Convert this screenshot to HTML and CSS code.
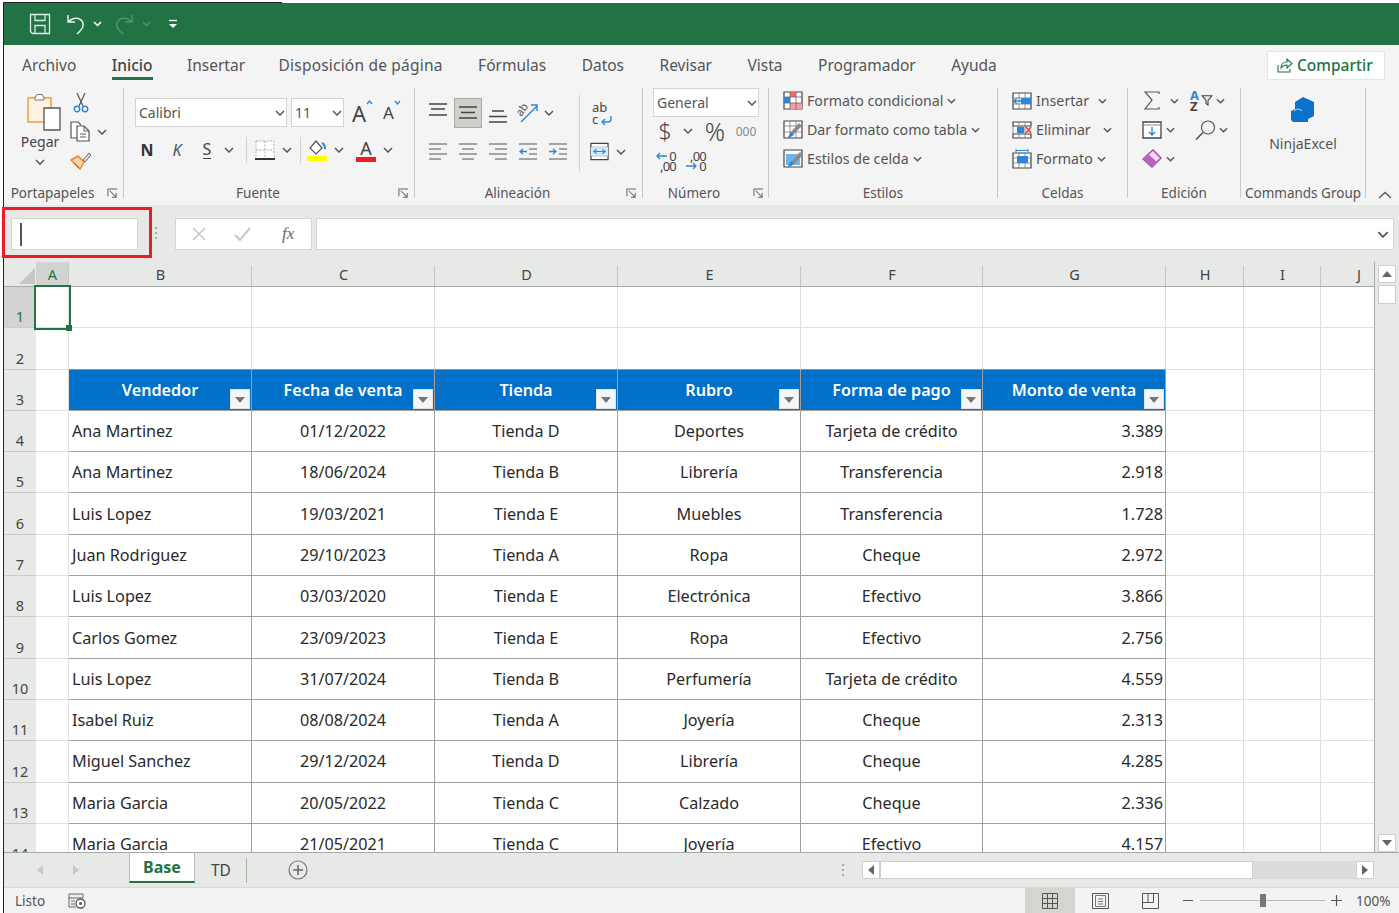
FILE: index.html
```html
<!DOCTYPE html>
<html lang="es">
<head>
<meta charset="utf-8">
<title>Excel</title>
<link rel="stylesheet" href="styles.css">
</head>
<body>
<svg class="defs" width="0" height="0">
  <symbol id="chev" viewBox="0 0 10 6"><path d="M1 1l4 4 4-4" fill="none" stroke="#555" stroke-width="1.5"/></symbol>
  <symbol id="launch" viewBox="0 0 12 12"><path d="M1 9V1h10M3 3l7 7M5.500 10H10V5.500" fill="none" stroke="#666" stroke-width="1.100"/></symbol>
</svg>
<div class="edge"></div>
<div class="app">
  <header class="qat">
    <svg class="q-save" width="22" height="22" viewBox="0 0 22 22"><path d="M1.500 1.500h19v19h-17l-2-2zM6 1.500v6h10v-6M6 20.500v-8h10v8" fill="none" stroke="#dfeae3" stroke-width="1.300"/></svg>
    <svg class="q-undo" width="20" height="22" viewBox="0 0 20 22"><path d="M2 2v7h7M2.500 9C6 4.500 13 4 16 8c2.500 3.500 1 8-5 13" fill="none" stroke="#e8f0eb" stroke-width="1.500"/></svg>
    <svg class="q-c" width="9" height="6"><path d="M1 1l3.500 3.500L8 1" fill="none" stroke="#fff" stroke-width="1.500"/></svg>
    <svg class="q-redo" width="20" height="22" viewBox="0 0 20 22"><path d="M18 2v7h-7M17.500 9C14 4.500 7 4 4 8c-2.500 3.500-1 8 5 13" fill="none" stroke="#4c9270" stroke-width="1.500"/></svg>
    <svg class="q-c2" width="9" height="6"><path d="M1 1l3.500 3.500L8 1" fill="none" stroke="#4c9270" stroke-width="1.500"/></svg>
    <svg class="q-more" width="10" height="10" viewBox="0 0 10 10"><path d="M1 1.500h8" stroke="#fff" stroke-width="1.300"/><path d="M1 5h8L5 9z" fill="#fff"/></svg>
  </header>

  <nav class="tabs">
    <span class="tab">Archivo</span>
    <span class="tab active">Inicio</span>
    <span class="tab t-ins">Insertar</span>
    <span class="tab t-disp">Disposición de página</span>
    <span class="tab">Fórmulas</span>
    <span class="tab">Datos</span>
    <span class="tab">Revisar</span>
    <span class="tab">Vista</span>
    <span class="tab">Programador</span>
    <span class="tab">Ayuda</span>
    <span class="share">
      <svg width="16" height="15" viewBox="0 0 16 15"><path d="M1 7v7h12v-3M4 10c0-4 3-6 6-6V1l5 4.500L10 10V7C7.500 7 5.500 8 4 10z" fill="none" stroke="#217346" stroke-width="1.100"/></svg>
      Compartir
    </span>
  </nav>

  <section class="ribbon">
    <div class="group g-clip">
      <div class="body clip">
        <div class="paste">
          <svg width="34" height="38" viewBox="0 0 34 38"><path d="M1 5h7l2-3h5l2 3h7v24H1z" fill="#fdf3e0" stroke="#e8a33d" stroke-width="1.500"/><path d="M8 5l2-3.500h5l2 3.500v2H8z" fill="#fff" stroke="#777"/><path d="M17 15h16v22H17z" fill="#fff" stroke="#555" stroke-width="1.300"/></svg>
          <span class="paste-l">Pegar</span>
          <svg class="chev" width="10" height="6"><use href="#chev"/></svg>
        </div>
        <div class="clip-tools">
          <svg class="scis" width="16" height="21" viewBox="0 0 16 21"><path d="M4 1l6 13M12 1L6 14" stroke="#555" stroke-width="1.200" fill="none"/><circle cx="4" cy="17" r="2.700" fill="none" stroke="#2b88d8" stroke-width="1.400"/><circle cx="12" cy="17" r="2.700" fill="none" stroke="#2b88d8" stroke-width="1.400"/></svg>
          <span class="copy-row">
            <svg width="21" height="21" viewBox="0 0 21 21"><path d="M7 17H1V1h7l3 3" fill="#fff" stroke="#555" stroke-width="1.200"/><path d="M7 5h7l5 5v10H7z" fill="#fff" stroke="#555" stroke-width="1.200"/><path d="M14 5v5h5M10 13h6M10 16h6" fill="none" stroke="#555"/></svg>
            <svg class="chev" width="10" height="6"><use href="#chev"/></svg>
          </span>
          <svg class="brush" width="22" height="20" viewBox="0 0 22 20"><path d="M1 9l9 9 4-7-6-6z" fill="#fbd9a5" stroke="#e8872d" stroke-width="1.500"/><path d="M13 9l6-7 2 2-6 7zM4 12l5 5" fill="#ddd" stroke="#666"/></svg>
        </div>
      </div>
      <div class="label"><span>Portapapeles</span><svg class="launch" width="11" height="11"><use href="#launch"/></svg></div>
    </div>

    <div class="group g-font">
      <div class="body font">
        <div class="font-r1">
          <span class="select sel-font">Calibri<svg width="10" height="6"><use href="#chev"/></svg></span>
          <span class="select sel-size">11<svg width="10" height="6"><use href="#chev"/></svg></span>
          <span class="grow"><b>A</b><svg width="7" height="5"><path d="M1 4l2.500-3L6 4" fill="none" stroke="#2b88d8" stroke-width="1.300"/></svg></span>
          <span class="shrink"><b>A</b><svg width="7" height="5"><path d="M1 1l2.500 3L6 1" fill="none" stroke="#2b88d8" stroke-width="1.300"/></svg></span>
        </div>
        <div class="font-r2">
          <b class="fb">N</b>
          <i class="fi">K</i>
          <span class="fu">S</span>
          <svg width="10" height="6"><use href="#chev"/></svg>
          <span class="vsep"></span>
          <svg width="20" height="20" viewBox="0 0 20 20"><path d="M1 1h18v18H1z" fill="#fff" stroke="#aaa" stroke-dasharray="2 1.500"/><path d="M1 10h18M10 1v18" stroke="#aaa" stroke-dasharray="2 1.500"/><path d="M0 19h20" stroke="#333" stroke-width="2"/></svg>
          <svg width="10" height="6"><use href="#chev"/></svg>
          <span class="vsep"></span>
          <svg width="20" height="21" viewBox="0 0 20 21"><path d="M9 1l6 7-6 6-6-6z" fill="#fff" stroke="#555" stroke-width="1.200"/><path d="M15 3c2 1 3 3 3 6" fill="none" stroke="#2b88d8" stroke-width="2"/><rect y="16" width="20" height="5" fill="#ffff00"/></svg>
          <svg width="10" height="6"><use href="#chev"/></svg>
          <span class="colorA">A</span>
          <svg width="10" height="6"><use href="#chev"/></svg>
        </div>
      </div>
      <div class="label"><span>Fuente</span><svg class="launch" width="11" height="11"><use href="#launch"/></svg></div>
    </div>

    <div class="group g-align">
      <div class="body align">
        <div class="align-grid">
          <svg class="al-t" width="18" height="13" viewBox="0 0 18 13"><path d="M0 1h18M2 6h14M0 12h18" stroke="#444" stroke-width="1.300"/></svg>
          <span class="al-on"><svg width="18" height="13" viewBox="0 0 18 13"><path d="M0 1h18M2 6.500h14M0 12h18" stroke="#444" stroke-width="1.300"/></svg></span>
          <svg class="al-b" width="18" height="13" viewBox="0 0 18 13"><path d="M3 1h12M0 6.500h18M0 12h18" stroke="#444" stroke-width="1.300"/></svg>
          <svg class="orient" width="22" height="21" viewBox="0 0 22 21"><path d="M4 20L20 4M14 3h6v6" fill="none" stroke="#2b88d8" stroke-width="1.400"/><text x="0" y="11" class="svgtxt" transform="rotate(-55 6 9)">ab</text></svg>
          <svg class="ch-or" width="10" height="6"><use href="#chev"/></svg>
          <svg width="18" height="17" viewBox="0 0 18 17"><path d="M0 1h18M0 6h12M0 11h18M0 16h12" stroke="#555" stroke-width="1.200"/></svg>
          <svg width="18" height="17" viewBox="0 0 18 17"><path d="M0 1h18M3 6h12M0 11h18M3 16h12" stroke="#555" stroke-width="1.200"/></svg>
          <svg width="18" height="17" viewBox="0 0 18 17"><path d="M0 1h18M6 6h12M0 11h18M6 16h12" stroke="#555" stroke-width="1.200"/></svg>
          <svg width="18" height="17" viewBox="0 0 18 17"><path d="M0 1h18M10 6h8M10 11h8M0 16h18" stroke="#555" stroke-width="1.200"/><path d="M8 8.500H1M4 6L1 8.500 4 11" fill="none" stroke="#2b88d8" stroke-width="1.300"/></svg>
          <svg width="18" height="17" viewBox="0 0 18 17"><path d="M0 1h18M10 6h8M10 11h8M0 16h18" stroke="#555" stroke-width="1.200"/><path d="M0 8.500h7M4 6l3 2.500L4 11" fill="none" stroke="#2b88d8" stroke-width="1.300"/></svg>
        </div>
        <span class="vsep tall"></span>
        <div class="align-right">
          <span class="wrap"><span class="wrap-t">ab<br>c</span><svg width="12" height="10" viewBox="0 0 12 10"><path d="M10 1v3c0 2-1 3-3 3H1M4 4L1 7l3 3" fill="none" stroke="#2b88d8" stroke-width="1.400"/></svg></span>
          <span class="merge-row">
            <svg width="19" height="19" viewBox="0 0 20 19"><path d="M1 1h18v17H1z" fill="#fff" stroke="#444" stroke-width="1.300"/><path d="M1 5h18M1 14h18" stroke="#888"/><path d="M1 5h18v9H1z" fill="#d6ebfa"/><path d="M4 9.500h12M7 7L4 9.500 7 12M13 7l3 2.500L13 12" fill="none" stroke="#2b88d8" stroke-width="1.200"/></svg>
            <svg width="10" height="6"><use href="#chev"/></svg>
          </span>
        </div>
      </div>
      <div class="label"><span>Alineación</span><svg class="launch" width="11" height="11"><use href="#launch"/></svg></div>
    </div>

    <div class="group g-num">
      <div class="body num">
        <span class="select sel-num">General<svg width="10" height="6"><use href="#chev"/></svg></span>
        <div class="num-r2">
          <span class="dollar">$</span>
          <svg width="10" height="6"><use href="#chev"/></svg>
          <span class="pct">%</span>
          <span class="mil">000</span>
        </div>
        <div class="num-r3">
          <span class="dec"><span class="d0"><svg width="11" height="8" viewBox="0 0 11 8"><path d="M11 4H1M4 1L1 4l3 3" fill="none" stroke="#2b88d8" stroke-width="1.300"/></svg><span>0</span></span><span class="d2">,00</span></span>
          <span class="dec"><span class="d2">,00</span><span class="d0"><svg width="11" height="8" viewBox="0 0 11 8"><path d="M0 4h10M7 1l3 3-3 3" fill="none" stroke="#2b88d8" stroke-width="1.300"/></svg><span>0</span></span></span>
        </div>
      </div>
      <div class="label"><span>Número</span><svg class="launch" width="11" height="11"><use href="#launch"/></svg></div>
    </div>

    <div class="group g-sty">
      <div class="body list">
        <div class="li">
          <svg width="20" height="19" viewBox="0 0 20 19"><path d="M1 1h18v17H1z" fill="#fff" stroke="#444" stroke-width="1.200"/><path d="M7 1h6v5H7z" fill="#f16b6b"/><path d="M1 6h6v6H1z" fill="#2b88d8"/><path d="M7 12h12v6H7z" fill="#f4a0a0"/><path d="M1 6h18M1 12h18M7 1v17M13 1v17" stroke="#666" stroke-width=".8"/></svg>
          <span>Formato condicional</span><svg class="c" width="9" height="6"><use href="#chev"/></svg>
        </div>
        <div class="li">
          <svg width="20" height="19" viewBox="0 0 20 19"><path d="M1 1h18v17H1z" fill="#fff" stroke="#444" stroke-width="1.200"/><path d="M1 6h18M1 12h18M7 1v17M13 1v17" stroke="#777" stroke-width=".8"/><path d="M6 18l2-6 8-9 3 3-8 8z" fill="#8a8a8a"/><path d="M4 19l4-7 3 3z" fill="#2b88d8"/></svg>
          <span>Dar formato como tabla</span><svg class="c" width="9" height="6"><use href="#chev"/></svg>
        </div>
        <div class="li">
          <svg width="20" height="19" viewBox="0 0 20 19"><path d="M1 1h18v17H1z" fill="#fff" stroke="#444" stroke-width="1.200"/><path d="M3 5h14v11H3z" fill="#6fb3e8"/><path d="M7 18l2-6 8-9 3 3-8 8z" fill="#8a8a8a"/><path d="M4 19l4-7 3 3z" fill="#2b88d8"/></svg>
          <span>Estilos de celda</span><svg class="c" width="9" height="6"><use href="#chev"/></svg>
        </div>
      </div>
      <div class="label"><span>Estilos</span></div>
    </div>

    <div class="group g-cel">
      <div class="body list">
        <div class="li">
          <svg width="20" height="18" viewBox="0 0 20 18"><path d="M1 1h18v16H1z" fill="#fff" stroke="#444" stroke-width="1.200"/><path d="M1 6h18M1 12h18M7 1v16M13 1v16" stroke="#777" stroke-width=".8"/><path d="M9 6h10v6H9z" fill="#2b88d8"/><path d="M11 9H2M5 6L2 9l3 3" fill="none" stroke="#2b88d8" stroke-width="1.400"/></svg>
          <span>Insertar</span><svg class="c c-ins" width="9" height="6"><use href="#chev"/></svg>
        </div>
        <div class="li">
          <svg width="20" height="18" viewBox="0 0 20 18"><path d="M1 1h18v4H1zM1 13h18v4H1z" fill="#fff" stroke="#444" stroke-width="1.200"/><path d="M1 5v8M7 1v16M13 1v16" stroke="#777" stroke-width=".8"/><path d="M5 6h7v6H5z" fill="#2b88d8"/><path d="M14 6l5 6M19 6l-5 6" stroke="#e8393b" stroke-width="1.400"/></svg>
          <span>Eliminar</span><svg class="c c-eli" width="9" height="6"><use href="#chev"/></svg>
        </div>
        <div class="li">
          <svg width="20" height="20" viewBox="0 0 20 20"><path d="M1 4h18v15H1z" fill="#fff" stroke="#444" stroke-width="1.200"/><path d="M1 9h18M1 14h18M7 4v15M13 4v15" stroke="#777" stroke-width=".8"/><path d="M5 7h11v7H5z" fill="#2b88d8"/><path d="M4 1.500h12M4 0v3M16 0v3" stroke="#2b88d8"/></svg>
          <span>Formato</span><svg class="c" width="9" height="6"><use href="#chev"/></svg>
        </div>
      </div>
      <div class="label"><span>Celdas</span></div>
    </div>

    <div class="group g-edit">
      <div class="body edit">
        <div class="ed-row">
          <svg class="ed-a" width="16" height="19" viewBox="0 0 16 19"><path d="M15 3V1H1l7 8-7 9h14v-2" fill="none" stroke="#555" stroke-width="1.200"/></svg>
          <svg class="ed-c" width="9" height="6"><use href="#chev"/></svg>
          <span class="sort"><span class="az"><span class="az-a">A</span><span class="az-z">Z</span></span><svg width="12" height="11" viewBox="0 0 11 11"><path d="M.700.700h9.600L6.500 5.500V10L4.500 8.500v-3z" fill="none" stroke="#444" stroke-width="1.100"/></svg></span>
          <svg class="ed-d" width="9" height="6"><use href="#chev"/></svg>
        </div>
        <div class="ed-row">
          <svg class="ed-a" width="20" height="18" viewBox="0 0 20 18"><path d="M1 1h18v16H1z" fill="#fff" stroke="#444" stroke-width="1.300"/><path d="M1 4h18" stroke="#888"/><path d="M10 6v8M7 11l3 3 3-3" fill="none" stroke="#2b88d8" stroke-width="1.400"/></svg>
          <svg class="ed-c2" width="9" height="6"><use href="#chev"/></svg>
          <svg class="ed-find" width="21" height="20" viewBox="0 0 21 20"><circle cx="13" cy="7.500" r="6.500" fill="none" stroke="#555" stroke-width="1.200"/><path d="M8 12.500L1 19.500" stroke="#555" stroke-width="1.600"/></svg>
          <svg class="ed-d2" width="9" height="6"><use href="#chev"/></svg>
        </div>
        <div class="ed-row">
          <svg class="ed-a" width="20" height="19" viewBox="0 0 20 19"><path d="M1 10L11 1l8 8-9 9z" fill="#f3d9f3" stroke="#a64ca6" stroke-width="1.500"/><path d="M1 10l5-5 9 8-5 5z" fill="#b565b5"/></svg>
          <svg class="ed-c2" width="9" height="6"><use href="#chev"/></svg>
        </div>
      </div>
      <div class="label"><span>Edición</span></div>
    </div>

    <div class="group g-cmd">
      <div class="body cmd">
        <svg width="24" height="26" viewBox="0 0 24 26"><path d="M12 0l11 5v14l-6 3v3H2l-2-2v-9l4-2V5z" fill="#0b72c9"/><path d="M3 14c3-3 6-2 8 0" fill="none" stroke="#dbe9f5" stroke-width="1"/></svg>
        <span>NinjaExcel</span>
      </div>
      <div class="label"><span>Commands Group</span></div>
    </div>

    <svg class="collapse" width="14" height="8" viewBox="0 0 14 8"><path d="M1 7l6-5.500L13 7" fill="none" stroke="#555" stroke-width="1.300"/></svg>
  </section>

  <section class="fbar">
    <div class="namebox"><span class="caret"></span></div>
    <span class="grip"></span>
    <div class="fbtns">
      <svg width="14" height="14" viewBox="0 0 14 14"><path d="M1 1l12 12M13 1L1 13" stroke="#c8c8c8" stroke-width="1.600"/></svg>
      <svg width="17" height="14" viewBox="0 0 17 14"><path d="M1 8l5 5L16 1" fill="none" stroke="#c8c8c8" stroke-width="2"/></svg>
      <span class="fx">fx</span>
    </div>
    <div class="finput"><svg width="12" height="7"><use href="#chev"/></svg></div>
    <div class="redbox"></div>
  </section>

  <section class="main">
    <div class="sheet">
      <div class="row colhead">
        <span class="corner"><svg width="16" height="16" viewBox="0 0 16 16"><path d="M16 0v16H0z" fill="#c4c8c4"/></svg></span>
        <span class="sel">A</span><span>B</span><span>C</span><span>D</span><span>E</span><span>F</span><span>G</span><span>H</span><span>I</span><span class="col-j">J</span>
      </div>
      <div class="row"><b class="rh rh-sel">1</b><u class="cursor"><em class="handle"></em></u><u></u><u></u><u></u><u></u><u></u><u></u><u></u><u></u><u></u></div>
      <div class="row"><b class="rh">2</b><u></u><u class="nb"></u><u class="nb"></u><u class="nb"></u><u class="nb"></u><u class="nb"></u><u class="nb"></u><u></u><u></u><u></u></div>
      <div class="row"><b class="rh">3</b><u></u><s>Vendedor<i class="fl"></i></s><s>Fecha de venta<i class="fl"></i></s><s>Tienda<i class="fl"></i></s><s>Rubro<i class="fl"></i></s><s>Forma de pago<i class="fl"></i></s><s>Monto de venta<i class="fl"></i></s><u></u><u></u><u></u></div>
      <div class="row"><b class="rh">4</b><u></u><p class="l">Ana Martinez</p><p>01/12/2022</p><p>Tienda D</p><p>Deportes</p><p>Tarjeta de crédito</p><p class="r">3.389</p><u></u><u></u><u></u></div>
      <div class="row"><b class="rh">5</b><u></u><p class="l">Ana Martinez</p><p>18/06/2024</p><p>Tienda B</p><p>Librería</p><p>Transferencia</p><p class="r">2.918</p><u></u><u></u><u></u></div>
      <div class="row"><b class="rh">6</b><u></u><p class="l">Luis Lopez</p><p>19/03/2021</p><p>Tienda E</p><p>Muebles</p><p>Transferencia</p><p class="r">1.728</p><u></u><u></u><u></u></div>
      <div class="row"><b class="rh">7</b><u></u><p class="l">Juan Rodriguez</p><p>29/10/2023</p><p>Tienda A</p><p>Ropa</p><p>Cheque</p><p class="r">2.972</p><u></u><u></u><u></u></div>
      <div class="row"><b class="rh">8</b><u></u><p class="l">Luis Lopez</p><p>03/03/2020</p><p>Tienda E</p><p>Electrónica</p><p>Efectivo</p><p class="r">3.866</p><u></u><u></u><u></u></div>
      <div class="row"><b class="rh">9</b><u></u><p class="l">Carlos Gomez</p><p>23/09/2023</p><p>Tienda E</p><p>Ropa</p><p>Efectivo</p><p class="r">2.756</p><u></u><u></u><u></u></div>
      <div class="row"><b class="rh">10</b><u></u><p class="l">Luis Lopez</p><p>31/07/2024</p><p>Tienda B</p><p>Perfumería</p><p>Tarjeta de crédito</p><p class="r">4.559</p><u></u><u></u><u></u></div>
      <div class="row"><b class="rh">11</b><u></u><p class="l">Isabel Ruiz</p><p>08/08/2024</p><p>Tienda A</p><p>Joyería</p><p>Cheque</p><p class="r">2.313</p><u></u><u></u><u></u></div>
      <div class="row"><b class="rh">12</b><u></u><p class="l">Miguel Sanchez</p><p>29/12/2024</p><p>Tienda D</p><p>Librería</p><p>Cheque</p><p class="r">4.285</p><u></u><u></u><u></u></div>
      <div class="row"><b class="rh">13</b><u></u><p class="l">Maria Garcia</p><p>20/05/2022</p><p>Tienda C</p><p>Calzado</p><p>Cheque</p><p class="r">2.336</p><u></u><u></u><u></u></div>
      <div class="row"><b class="rh">14</b><u></u><p class="l">Maria Garcia</p><p>21/05/2021</p><p>Tienda C</p><p>Joyería</p><p>Efectivo</p><p class="r">4.157</p><u></u><u></u><u></u></div>
    </div>
    <aside class="vscroll">
      <span class="sb-btn"><svg width="10" height="6"><path d="M5 0l5 6H0z" fill="#666"/></svg></span>
      <span class="sb-thumb"></span>
      <span class="sb-fill"></span>
      <span class="sb-btn"><svg width="10" height="6"><path d="M0 0h10L5 6z" fill="#666"/></svg></span>
    </aside>
  </section>

  <section class="tabstrip">
    <svg class="nav-l" width="6" height="10"><path d="M6 0v10L0 5z" fill="#c8c8c8"/></svg>
    <svg class="nav-r" width="6" height="10"><path d="M0 0v10l6-5z" fill="#c8c8c8"/></svg>
    <span class="sheet-tab">Base</span>
    <span class="sheet-td">TD</span>
    <span class="tsep"></span>
    <svg class="plus" width="20" height="20" viewBox="0 0 20 20"><circle cx="10" cy="10" r="9" fill="none" stroke="#777" stroke-width="1.200"/><path d="M10 5v10M5 10h10" stroke="#666" stroke-width="1.500"/></svg>
    <span class="hgrip"></span>
    <div class="hscroll">
      <span class="hb"><svg width="6" height="10"><path d="M6 0v10L0 5z" fill="#666"/></svg></span>
      <span class="hthumb"></span>
      <span class="htrack"></span>
      <span class="hb"><svg width="6" height="10"><path d="M0 0v10l6-5z" fill="#666"/></svg></span>
    </div>
  </section>

  <footer class="status">
    <span class="listo">Listo</span>
    <svg class="macro" width="18" height="16" viewBox="0 0 18 16"><path d="M1 1h14v4H1zM1 5v9h7" fill="#eee" stroke="#666"/><path d="M3 8h4M3 11h4" stroke="#666"/><circle cx="12.500" cy="10.500" r="4.500" fill="#fff" stroke="#555" stroke-width="1.300"/><circle cx="12.500" cy="10.500" r="1.500" fill="#555"/></svg>
    <span class="st-on"><svg width="16" height="16" viewBox="0 0 16 16"><path d="M.5.500h15v15H.500zM.5 5.500h15M.5 10.500h15M5.500.500v15M10.500.500v15" fill="none" stroke="#555"/></svg></span>
    <span class="st-btn"><svg width="17" height="16" viewBox="0 0 17 16"><path d="M.5.500h16v15H.500z" fill="none" stroke="#555"/><path d="M3.500 2.500h10v11h-10zM6 6h5M6 8.500h5M6 11h5" fill="none" stroke="#777"/></svg></span>
    <span class="st-btn"><svg width="17" height="16" viewBox="0 0 17 16"><path d="M.5.500h16v15H.500zM.5 9.500h11V.500M6 .500v9" fill="none" stroke="#555"/></svg></span>
    <span class="zm-minus"></span>
    <span class="slider"><span class="knob"></span></span>
    <svg class="zm-plus" width="11" height="11" viewBox="0 0 11 11"><path d="M5.500 0v11M0 5.500h11" stroke="#555" stroke-width="1.200"/></svg>
    <span class="pctz">100%</span>
  </footer>
</div>
</body>
</html>
```
FILE: styles.css
```css
* { box-sizing: border-box; }
html, body { margin: 0; padding: 0; height: 100%; overflow: hidden; background: #fff; }
body { font-family: "Noto Sans", sans-serif; color: #444; font-size: 15px; }
.defs { position: absolute; }
.edge { height: 1px; width: 279px; margin: 2px 0 0 3px; background: #222; }
.app { margin-left: 3px; border-left: 1px solid #222; height: 910px; display: flex; flex-direction: column; width: 1396px; }

.qat { height: 42px; background: #217346; display: flex; align-items: center; padding-left: 25px; flex: none; }
.q-undo { margin-left: 15px; }
.q-c { margin-left: 7px; }
.q-redo { margin-left: 12px; }
.q-c2 { margin-left: 7.500px; }
.q-more { margin-left: 17.500px; }

.tabs { height: 40px; background: #f4f4f4; display: flex; align-items: center; padding-left: 18px; gap: 35.500px; flex: none; font-size: 15.500px; color: #555; }
.tab { position: relative; line-height: 40px; }
.t-ins { margin-left: -1px; }
.t-disp { margin-left: -2px; letter-spacing: .2px; }
.active { color: #444; font-weight: 500; }
.active::after { content: ""; position: absolute; left: 0; right: -1px; bottom: 5px; height: 3px; background: #217346; }
.share { margin-left: auto; margin-right: 14px; width: 118px; height: 29px; background: #fff; border: 1px solid #e6e6e6; color: #217346; font-weight: 500; display: flex; align-items: center; gap: 4px; padding-left: 9px; flex: none; }

.ribbon { height: 120px; background: #f4f4f4; display: flex; padding: 3px 0 7px; flex: none; position: relative; }
.group { display: flex; flex-direction: column; border-right: 1px solid #c8c8c8; height: 110px; flex: none; }
.g-clip { width: 120px; } .g-font { width: 291px; } .g-align { width: 228px; } .g-num { width: 126px; }
.g-sty { width: 229px; } .g-cel { width: 130px; } .g-edit { width: 113px; } .g-cmd { width: 125px; }
.body { height: 98px; flex: none; }
.label { display: flex; align-items: center; height: 14px; font-size: 13.500px; color: #555; }
.label span { flex: 1; text-align: center; white-space: nowrap; }
.launch { margin: 0 5px 0 6px; flex: none; }
.g-num .launch { margin-right: 4px; margin-left: 8px; }

.clip { display: flex; padding-left: 18px; }
.paste { width: 36px; display: flex; flex-direction: column; align-items: center; padding-top: 5px; }
.paste > svg:first-child { align-self: flex-start; margin-left: 5px; flex: none; }
.paste-l { font-size: 14px; line-height: 20px; margin-top: 1px; }
.chev { margin-top: 7px; }
.clip-tools { display: flex; flex-direction: column; padding: 4px 0 0 12px; width: 62px; }
.scis { margin-left: 3px; height: 21px; }
.copy-row { display: flex; align-items: center; gap: 6px; margin-top: 8px; }
.copy-row .chev { margin: 0; }
.brush { margin-top: 9px; }

.font { padding: 10px 0 0 11px; }
.font-r1 { display: flex; align-items: center; }
.select { background: #fff; border: 1px solid #d4d4d4; display: flex; align-items: center; justify-content: space-between; height: 29px; font-size: 14px; padding: 0 1px 0 3px; color: #555; }
.sel-font { width: 152px; }
.sel-size { width: 53px; margin-left: 4px; }
.grow, .shrink { display: flex; align-items: flex-start; }
.grow b, .shrink b { font-weight: 400; font-family: "Noto Sans", sans-serif; line-height: 26px; }
.grow { margin-left: 8px; width: 21px; } .grow b { font-size: 22px; }
.shrink { margin-left: 10px; width: 20px; } .shrink b { font-size: 17px; }
.font-r2 { display: grid; grid-template-columns: 24px 36px 24px 20px 14px 24px 20px 6px 28px 16px 38px 6px; justify-items: center; align-items: center; height: 26px; margin-top: 10px; }
.fb { font-size: 16px; font-weight: 700; color: #333; }
.fi { font-size: 16px; color: #555; }
.fu { font-size: 16px; border-bottom: 1px solid #444; line-height: 17px; }
.vsep { width: 1px; height: 26px; background: #d0d0d0; display: block; }
.colorA { font-size: 18px; line-height: 18px; width: 20px; text-align: center; border-bottom: 5px solid #ee1c25; color: #444; }

.align { display: flex; padding: 5px 0 0 8px; }
.align-grid { display: grid; grid-template-columns: repeat(5, 30px); grid-auto-rows: 39px; justify-items: center; align-items: center; width: 156px; }
.al-t { margin-bottom: 7px; }
.al-on { width: 28px; height: 30px; background: #cfd0ca; border: 1px solid #a9aaa5; display: flex; align-items: center; justify-content: center; }
.al-b { margin-top: 8px; }
.orient { overflow: visible; }
.ch-or { margin-right: 18px; }
.vsep.tall { height: 76px; margin-top: 2px; }
.align-right { display: grid; grid-auto-rows: 39px; align-items: center; padding-left: 10px; }
.wrap { display: flex; align-items: flex-end; width: 22px; height: 24px; margin-left: 2px; }
.wrap-t { font-size: 13px; line-height: 12px; width: 16px; flex: none; }
.wrap svg { margin: 0 0 0 -7px; flex: none; }
.merge-row { display: flex; align-items: center; gap: 7px; }
.svgtxt { font: 11px "Noto Sans", sans-serif; fill: #555; }

.num { padding: 0 0 0 10px; }
.sel-num { width: 106px; }
.num-r2 { display: grid; grid-template-columns: 24px 22px 32px 30px; justify-items: center; align-items: center; height: 28px; }
.dollar { font-size: 23px; line-height: 28px; font-weight: 300; }
.pct { font-size: 25px; line-height: 28px; font-weight: 300; }
.mil { font-size: 12px; color: #888; }
.num-r3 { display: flex; gap: 10px; padding: 0 0 0 3px; height: 28px; margin-top: 2px; align-items: center; }
.dec { display: flex; flex-direction: column; align-items: flex-end; width: 20px; font-size: 13px; line-height: 10px; color: #444; letter-spacing: -.8px; }
.d0 { display: flex; align-items: center; gap: 2px; }
.d0 svg { flex: none; }

.list { padding: 0 0 0 14px; display: grid; grid-auto-rows: 29px; align-items: center; align-content: start; margin-top: -2px; height: 100px; }
.li { display: flex; align-items: center; gap: 4px; font-size: 14.200px; white-space: nowrap; color: #555; }
.c-ins { margin-left: 5px; }
.c-eli { margin-left: 8px; }

.edit { padding: 0 0 0 14px; display: grid; grid-auto-rows: 29px; align-content: start; margin-top: -2px; height: 100px; }
.ed-row { display: flex; align-items: center; }
.ed-row:first-child .ed-a { margin-left: 2px; }
.ed-c { margin-left: 10px; }
.sort { margin-left: 11px; display: flex; align-items: center; width: 23px; }
.az { display: flex; flex-direction: column; font-size: 13px; line-height: 11px; font-weight: 700; width: 11px; flex: none; }
.az-a { color: #2b88d8; } .az-z { color: #444; }
.ed-d { margin-left: 3px; }
.ed-c2 { margin-left: 4px; }
.ed-find { margin-left: 20px; }
.ed-d2 { margin-left: 3px; }

.cmd { display: flex; flex-direction: column; align-items: center; padding-top: 9px; gap: 11px; font-size: 14px; color: #555; }
.collapse { align-self: flex-end; margin: 0 0 -1px 12px; }

.fbar { height: 57px; background: #e6e9e6; display: flex; align-items: flex-start; padding: 13px 0 0 7px; position: relative; flex: none; }
.namebox { width: 127px; height: 32px; background: #fff; border: 1px solid #d4d4d4; display: flex; align-items: center; padding-left: 8px; }
.caret { width: 1.500px; height: 23px; background: #555; }
.grip { width: 2px; height: 13px; margin: 9px 0 0 17px; background: repeating-linear-gradient(#aaa 0 2px, transparent 2px 5px); }
.fbtns { width: 137px; height: 32px; background: #fff; border: 1px solid #d4d4d4; margin-left: 18px; display: flex; align-items: center; padding-left: 16px; gap: 28px; }
.fx { font: italic 17px "Liberation Serif", serif; color: #666; margin-left: 3px; }
.finput { width: 1078px; height: 32px; background: #fff; border: 1px solid #d4d4d4; margin-left: 4px; display: flex; align-items: center; justify-content: flex-end; padding-right: 4px; }
.redbox { position: absolute; left: -2px; top: 2px; width: 150px; height: 51px; border: 3px solid #ed1c24; }

.main { display: flex; height: 590px; flex: none; }
.sheet { width: 1371px; flex: none; overflow: hidden; height: 590px; border-right: 1px solid #a8a8a8; }
.row { display: grid; grid-template-columns: 32px 33px 183px 183px 183px 183px 182px 183px 78px 77px 54px; height: 41.300px; }
.colhead { height: 25px; background: #e6e9e6; border-bottom: 1px solid #a8a8a8; font-size: 14.500px; color: #444; }
.colhead span { display: flex; align-items: center; justify-content: center; position: relative; padding-bottom: 1px; }
.colhead span::after { content: ""; position: absolute; right: 0; top: 4px; bottom: 0; width: 1px; background: #c2c5c2; }
.colhead .corner { justify-content: flex-end; padding: 4px 1px 0 0; }
.colhead .corner::after { display: none; }
.colhead .col-j { padding-left: 22px; }
.colhead .col-j::after { display: none; }
.colhead .sel { background: #d3d3d3; color: #217346; }
.row > b, .row > u, .row > s, .row > p { display: flex; margin: 0; font-weight: 400; text-decoration: none; overflow: visible; min-width: 0; }
.rh { background: #e6e9e6; border-bottom: 1px solid #c9ccc9; align-items: flex-end; justify-content: center; font-size: 14.500px; line-height: 20px; padding-bottom: 1px; color: #444; }
.rh-sel { background: #d3d3d3; color: #217346; }
.row > u { border-right: 1px solid #e0e0e0; border-bottom: 1px solid #e0e0e0; position: relative; }
.row > u.nb { border-bottom-color: #8f8f8f; }
.row > s { background: #0070c8; color: #fff; font-size: 16.200px; font-weight: 600; align-items: center; justify-content: center; position: relative; border-right: 1px solid #a0a0a0; border-bottom: 1px solid #a0a0a0; white-space: nowrap; }
.row > p { font-size: 16.200px; color: #2a2a2a; align-items: center; justify-content: center; border-right: 1px solid #a0a0a0; border-bottom: 1px solid #a0a0a0; white-space: nowrap; }
.row > p.l { justify-content: flex-start; padding-left: 3px; border-left: 1px solid #a0a0a0; margin-left: -1px; }
.row > p.r { justify-content: flex-end; padding-right: 2px; }
.fl { position: absolute; right: 1px; bottom: 1px; width: 20px; height: 20px; background: #f4f6f8; border: 1px solid #e1e4e8; }
.fl::after { content: ""; position: absolute; left: 4px; top: 7px; border: 5px solid transparent; border-top: 6px solid #777; border-bottom: 0; }
.cursor { outline: 2px solid #217346; outline-offset: 0; z-index: 2; }
.handle { position: absolute; right: -4px; bottom: -4px; width: 6px; height: 6px; background: #217346; border: 0; }

.vscroll { width: 25px; background: #e6e9e6; display: flex; flex-direction: column; align-items: center; padding: 3px 0 0; height: 590px; }
.sb-btn { width: 18px; height: 18px; background: #fff; border: 1px solid #d0d0d0; display: flex; align-items: center; justify-content: center; flex: none; }
.sb-thumb { width: 18px; height: 19px; background: #fff; border: 1px solid #cfcfcf; margin-top: 2px; flex: none; }
.sb-fill { flex: 1; }

.tabstrip { height: 35px; background: #e6e9e6; border-top: 1px solid #a8a8a8; display: flex; align-items: center; flex: none; padding-left: 33px; }
.nav-r { margin-left: 30px; }
.sheet-tab { width: 66px; height: 30px; margin: -4px 0 0 50px; background: #fff; border: 1px solid #b8bcb8; border-top: 0; border-bottom: 2px solid #217346; color: #217346; font-weight: 700; font-size: 16px; display: flex; align-items: center; justify-content: center; }
.sheet-td { margin-left: 16px; font-size: 15.500px; color: #444; width: 21px; }
.tsep { width: 1px; height: 25px; background: #aab0aa; margin-left: 14px; }
.plus { margin-left: 41px; }
.hgrip { width: 2px; height: 13px; margin-left: 534px; background: repeating-linear-gradient(#aaa 0 2px, transparent 2px 5px); }
.hscroll { display: flex; margin-left: 18px; width: 512px; height: 18px; background: #dcdcdc; }
.hb { width: 18px; height: 18px; background: #fff; border: 1px solid #d0d0d0; display: flex; align-items: center; justify-content: center; flex: none; }
.hthumb { width: 373px; background: #fff; border: 1px solid #cfcfcf; flex: none; }
.htrack { flex: 1; }

.status { height: 26px; background: #f3f3f3; border-top: 1px solid #d8d8d8; display: flex; align-items: center; flex: none; padding-left: 11px; font-size: 13.500px; color: #555; }
.listo { width: 53px; }
.macro { flex: none; }
.st-on { width: 50px; height: 26px; background: #d3d5d0; display: flex; align-items: center; justify-content: center; margin-left: 939px; }
.st-btn { width: 50px; display: flex; justify-content: center; }
.zm-minus { width: 10px; height: 1.500px; background: #555; margin-left: 8px; }
.slider { width: 125px; height: 1px; background: #bbb; margin-left: 7px; position: relative; }
.knob { position: absolute; left: 60px; top: -6px; width: 6px; height: 13px; background: #777; }
.zm-plus { margin-left: 6px; }
.pctz { margin-left: 14px; white-space: nowrap; }
```
